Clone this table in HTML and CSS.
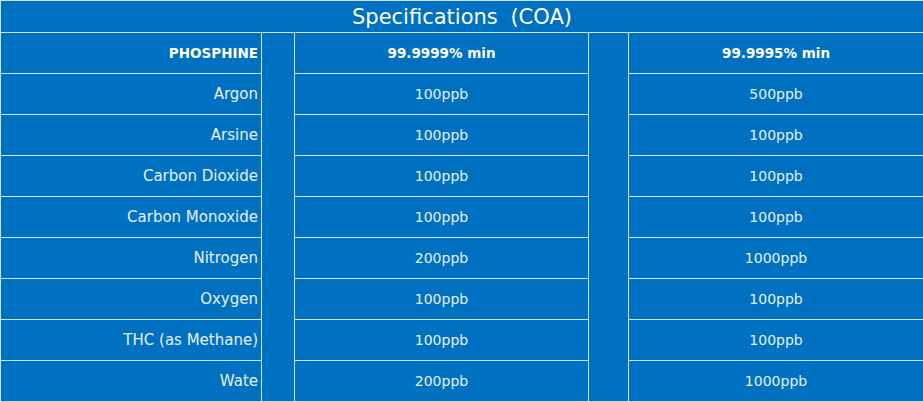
FILE: index.html
```html
<!DOCTYPE html>
<html>
<head>
<meta charset="utf-8">
<link rel="stylesheet" href="styles.css">
</head>
<body>
<table class="spec">
  <colgroup>
    <col class="c-label">
    <col class="c-gap1">
    <col class="c-val1">
    <col class="c-gap2">
    <col class="c-val2">
  </colgroup>
  <tr class="title-row"><th colspan="5" class="title">Specifications (COA)</th></tr>
  <tr class="row head">
    <th class="label">PHOSPHINE</th>
    <td class="gap" rowspan="9"></td>
    <th class="val">99.9999% min</th>
    <td class="gap" rowspan="9"></td>
    <th class="val">99.9995% min</th>
  </tr>
  <tr class="row"><td class="label">Argon</td><td class="val">100ppb</td><td class="val">500ppb</td></tr>
  <tr class="row"><td class="label">Arsine</td><td class="val">100ppb</td><td class="val">100ppb</td></tr>
  <tr class="row"><td class="label">Carbon Dioxide</td><td class="val">100ppb</td><td class="val">100ppb</td></tr>
  <tr class="row"><td class="label">Carbon Monoxide</td><td class="val">100ppb</td><td class="val">100ppb</td></tr>
  <tr class="row"><td class="label">Nitrogen</td><td class="val">200ppb</td><td class="val">1000ppb</td></tr>
  <tr class="row"><td class="label">Oxygen</td><td class="val">100ppb</td><td class="val">100ppb</td></tr>
  <tr class="row"><td class="label">THC (as Methane)</td><td class="val">100ppb</td><td class="val">100ppb</td></tr>
  <tr class="row"><td class="label">Wate</td><td class="val">200ppb</td><td class="val">1000ppb</td></tr>
</table>
</body>
</html>
```

FILE: styles.css
```css
html, body {
  margin: 0;
  padding: 0;
  background: #ffffff;
}
.spec {
  width: 923px;
  border-collapse: collapse;
  table-layout: fixed;
  background: #0070c0;
  font-family: "DejaVu Sans", "Noto Sans", sans-serif;
  color: #e6f0f9;
}
.c-label { width: 261px; }
.c-gap1 { width: 33px; }
.c-val1 { width: 294px; }
.c-gap2 { width: 40px; }
.c-val2 { width: 295px; }
.spec th, .spec td {
  border: 1px solid #cfe2f3;
  padding: 0;
  overflow: hidden;
  white-space: nowrap;
}
.title-row { height: 32px; }
.title {
  font-size: 21px;
  font-weight: normal;
  color: #ffffff;
  text-align: center;
  word-spacing: 6px;
  vertical-align: middle;
}
.row { height: 41px; }
.label {
  text-align: right;
  padding-right: 3px !important;
  font-size: 15px;
  font-weight: normal;
}
.val {
  text-align: center;
  font-size: 14px;
  font-weight: normal;
}
.head th {
  font-weight: bold;
  color: #ffffff;
  font-size: 13.5px;
}
.gap { border-top: 0; }
```
